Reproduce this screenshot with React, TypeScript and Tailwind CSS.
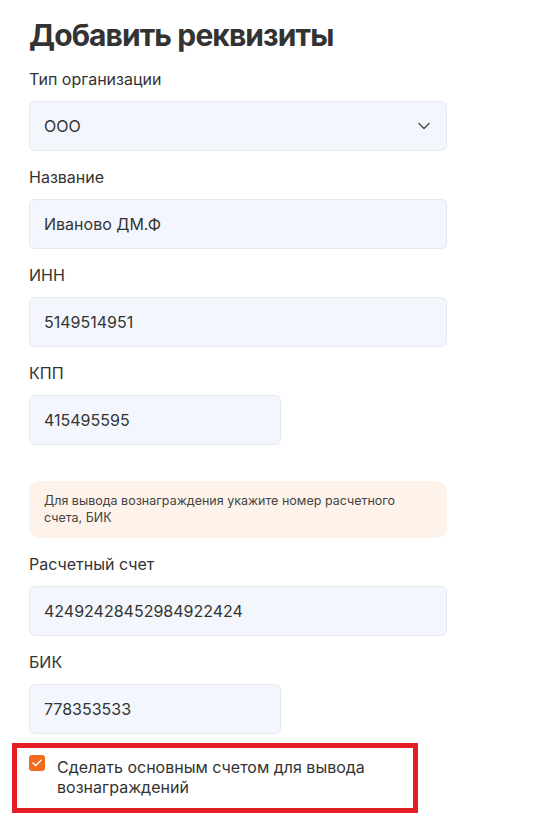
import React from "react";

function Field({ label, value, narrow }: { label: string; value: string; narrow?: boolean }) {
  return (
    <div className="flex flex-col">
      <div className="text-[16px] leading-[24px] text-[#333333]">{label}</div>
      <div
        className={`mt-[10px] h-[50px] ${narrow ? "w-[252px]" : "w-full"} flex items-center rounded-[6px] border border-[#e4e9f0] bg-[#f3f7fd] pl-[14px] text-[16px] text-[#333333]`}
      >
        {value}
      </div>
    </div>
  );
}

export default function App() {
  return (
    <div className="min-h-[824px] w-[559px] bg-white" style={{ fontFamily: "Inter, 'Noto Sans', sans-serif" }}>
      <div className="w-[447px] pl-[29px] pt-[15px]">
        <h1 className="text-[30px] font-bold leading-[40px] tracking-[-0.9px] text-[#333333]">Добавить реквизиты</h1>
        <div className="mt-[12px] flex flex-col gap-[14px]">
          <div className="flex flex-col">
            <div className="text-[16px] leading-[24px] text-[#333333]">Тип организации</div>
            <div className="mt-[10px] flex h-[50px] w-full items-center justify-between rounded-[6px] border border-[#e4e9f0] bg-[#f3f7fd] pl-[14px] pr-[16px] text-[16px] text-[#333333]">
              <span>ООО</span>
              <svg width="12" height="8" viewBox="0 0 12 8" fill="none">
                <path d="M1 1.5L6 6.5L11 1.5" stroke="#444" strokeWidth="1.3" strokeLinecap="round" strokeLinejoin="round" />
              </svg>
            </div>
          </div>
          <Field label="Название" value="Иваново ДМ.Ф" />
          <Field label="ИНН" value="5149514951" />
          <Field label="КПП" value="415495595" narrow />
          <div className="mt-[22px] rounded-[10px] bg-[#fdf3ea] pb-[12px] pl-[15px] pr-[15px] pt-[11px] text-[12.5px] leading-[17px] text-[#444444]">
            Для вывода вознаграждения укажите номер расчетного
            <br />
            счета, БИК
          </div>
          <Field label="Расчетный счет" value="42492428452984922424" />
          <Field label="БИК" value="778353533" narrow />
          <div className="-ml-[17px] -mt-[5px] flex w-[406px] items-start gap-[12px] border-[5px] border-[#e31e24] pb-[11px] pl-[12px] pt-[9px]">
            <div className="mt-[-2px] flex h-[16px] w-[16px] shrink-0 items-center justify-center rounded-[3px] bg-[#f26a1c]">
              <svg width="10" height="8" viewBox="0 0 10 8" fill="none">
                <path d="M1 4L3.8 6.6L9 1.2" stroke="white" strokeWidth="1.5" strokeLinecap="round" strokeLinejoin="round" />
              </svg>
            </div>
            <div className="w-[340px] text-[16px] leading-[20px] text-[#333333]">
              Сделать основным счетом для вывода вознаграждений
            </div>
          </div>
        </div>
      </div>
    </div>
  );
}
